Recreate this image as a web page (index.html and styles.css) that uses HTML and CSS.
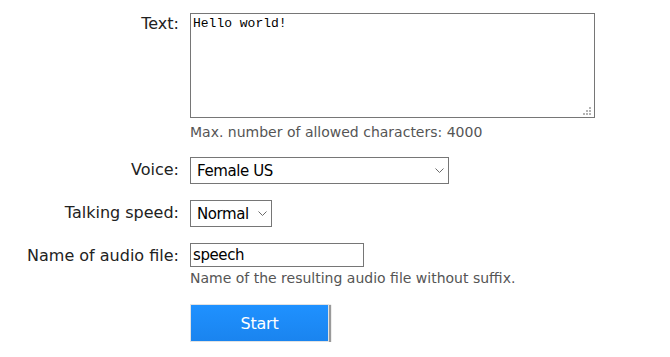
FILE: index.html
```html
<!DOCTYPE html>
<html>
<head>
<meta charset="utf-8">
<link rel="stylesheet" href="styles.css">
</head>
<body>
<form class="form">
  <label class="label label-text" for="txt">Text:</label>
  <div class="field">
    <div class="ta-wrap">
      <textarea id="txt" class="textarea">Hello world!</textarea>
      <svg class="grip" width="9" height="8" viewBox="0 0 9 8"><g fill="#b4b4b4"><rect x="6" y="0" width="2" height="2"/><rect x="3" y="3" width="2" height="2"/><rect x="6" y="3" width="2" height="2"/><rect x="0" y="6" width="2" height="2"/><rect x="3" y="6" width="2" height="2"/><rect x="6" y="6" width="2" height="2"/></g></svg>
    </div>
    <div class="hint hint-max">Max. number of allowed characters: 4000</div>
  </div>

  <label class="label label-ctl" for="voice">Voice:</label>
  <div class="field">
    <span class="sel-wrap sel-voice">
      <select id="voice" class="select"><option>Female US</option></select>
      <svg class="chev" width="9" height="5" viewBox="0 0 9 5"><path d="M0.5 0.5 L4.5 4.5 L8.5 0.5" fill="none" stroke="#6b6b6b" stroke-width="1"/></svg>
    </span>
  </div>

  <label class="label label-ctl" for="speed">Talking speed:</label>
  <div class="field">
    <span class="sel-wrap sel-speed">
      <select id="speed" class="select"><option>Normal</option></select>
      <svg class="chev" width="9" height="5" viewBox="0 0 9 5"><path d="M0.5 0.5 L4.5 4.5 L8.5 0.5" fill="none" stroke="#6b6b6b" stroke-width="1"/></svg>
    </span>
  </div>

  <label class="label label-ctl" for="fname">Name of audio file:</label>
  <div class="field">
    <input id="fname" class="input" type="text" value="speech">
    <div class="hint hint-file">Name of the resulting audio file without suffix.</div>
  </div>

  <div></div>
  <div class="field">
    <button type="button" class="btn">Start</button>
  </div>
</form>
</body>
</html>
```

FILE: styles.css
```css
html, body {
  margin: 0;
  padding: 0;
  background: #fff;
}
body {
  font-family: "DejaVu Sans", Verdana, sans-serif;
  color: #222;
}
.form {
  display: grid;
  grid-template-columns: 179px 1fr;
  column-gap: 11px;
  row-gap: 16px;
  padding-top: 13px;
  align-items: start;
}
.label {
  text-align: right;
  font-size: 16px;
  color: #222;
}
.label-text {
  line-height: 22px;
}
.label-ctl {
  line-height: 26px;
}
.field {
  display: flex;
  flex-direction: column;
  align-items: flex-start;
}
.ta-wrap {
  position: relative;
  width: 405px;
  height: 105px;
}
.textarea {
  box-sizing: border-box;
  width: 405px;
  height: 105px;
  margin: 0;
  border: 1px solid #767676;
  padding: 2px 2px;
  font-family: "Liberation Mono", "Courier New", monospace;
  font-size: 13px;
  line-height: 15px;
  color: #000;
  resize: none;
  outline: none;
  display: block;
}
.grip {
  position: absolute;
  right: 3px;
  bottom: 3px;
}
.hint {
  font-size: 14px;
  line-height: 18px;
  color: #555;
}
.hint-max {
  margin-top: 5px;
}
.hint-file {
  margin-top: 2px;
}
.sel-wrap {
  position: relative;
  display: inline-block;
}
.select {
  -webkit-appearance: none;
  appearance: none;
  box-sizing: border-box;
  height: 27px;
  margin: 0;
  border: 1px solid #767676;
  border-radius: 0;
  background: #fff;
  font-family: "DejaVu Sans", Verdana, sans-serif;
  font-size: 15px;
  letter-spacing: -0.4px;
  color: #000;
  padding: 0 20px 0 6px;
  outline: none;
  display: block;
}
.sel-voice .select {
  width: 259px;
}
.sel-speed .select {
  width: 82px;
}
.chev {
  position: absolute;
  right: 5px;
  top: 11px;
}
.input {
  box-sizing: border-box;
  width: 174px;
  height: 24px;
  margin: 0;
  border: 1px solid #767676;
  padding: 0 2px;
  font-family: "DejaVu Sans", Verdana, sans-serif;
  font-size: 15px;
  letter-spacing: -0.4px;
  color: #000;
  outline: none;
  display: block;
}
.btn {
  margin-top: 1px;
  box-sizing: border-box;
  width: 139px;
  height: 38px;
  border: 1px solid #e2e2e2;
  background: linear-gradient(#1f91ff, #1a84ef);
  box-shadow: 2px 1px 1px #9a9a9a;
  color: #fff;
  font-family: "DejaVu Sans", Verdana, sans-serif;
  font-size: 16px;
  letter-spacing: -0.2px;
  padding: 0;
  cursor: pointer;
}
```
